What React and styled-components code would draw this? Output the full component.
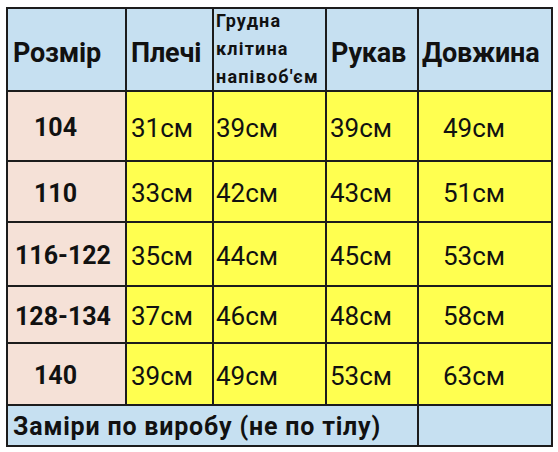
import React from "react";
import styled, { createGlobalStyle } from "styled-components";

const Global = createGlobalStyle`
  html, body { margin: 0; padding: 0; background: #ffffff; }
  body { font-family: Roboto, "Noto Sans", Arial, sans-serif; color: #111; }
`;

const Page = styled.div`
  width: 558px;
  height: 452px;
  padding: 7px 0 0 6px;
  box-sizing: border-box;
`;

const Table = styled.div`
  display: grid;
  grid-template-columns: 117px 85px 111px 90px 132px;
  grid-template-rows: 81px 68px 59px 62px 55px 60px 39px;
  gap: 2px;
  padding: 2px;
  background: #1c1c1c;
  width: max-content;
`;

const colors = {
  head: "#c6e0f1",
  size: "#f5e1d7",
  data: "#ffff50",
};

const Cell = styled.div`
  background: ${(p) => colors[p.$kind]};
  display: flex;
  align-items: center;
  padding-left: ${(p) => p.$indent ?? 4}px;
  box-sizing: border-box;
  overflow: hidden;
  white-space: nowrap;
  grid-column: ${(p) => p.$span || "auto"};
`;

const HeadText = styled.span`
  font-weight: 700;
  font-size: 27px;
  letter-spacing: -0.2px;
  padding-top: 6px;
`;

const SmallHead = styled.div`
  font-weight: 700;
  font-size: 18px;
  line-height: 28px;
  letter-spacing: 1.2px;
  margin-top: -2px;
`;

const SizeText = styled.span`
  font-weight: 700;
  font-size: 25px;
  padding-top: 3px;
`;

const DataText = styled.span`
  font-weight: 400;
  font-size: 26px;
  padding-top: 3px;
`;

const FootText = styled.span`
  font-weight: 700;
  font-size: 25px;
  letter-spacing: 0.8px;
  padding-top: 2px;
`;

const rows = [
  { size: "104", si: 26, v: ["31см", "39см", "39см", "49см"] },
  { size: "110", si: 26, v: ["33см", "42см", "43см", "51см"] },
  { size: "116-122", si: 7, v: ["35см", "44см", "45см", "53см"] },
  { size: "128-134", si: 7, v: ["37см", "46см", "48см", "58см"] },
  { size: "140", si: 26, v: ["39см", "49см", "53см", "63см"] },
];

const dataIndent = [4, 2, 3, 24];

export default function App() {
  return (
    <>
      <Global />
      <Page>
        <Table>
          <Cell $kind="head" $indent={5}><HeadText>Розмір</HeadText></Cell>
          <Cell $kind="head" $indent={4}><HeadText>Плечі</HeadText></Cell>
          <Cell $kind="head" $indent={2}>
            <SmallHead>Грудна<br />клітина<br />напівоб'єм</SmallHead>
          </Cell>
          <Cell $kind="head" $indent={4}><HeadText>Рукав</HeadText></Cell>
          <Cell $kind="head" $indent={3}><HeadText>Довжина</HeadText></Cell>
          {rows.map((r) => (
            <React.Fragment key={r.size}>
              <Cell $kind="size" $indent={r.si}><SizeText>{r.size}</SizeText></Cell>
              {r.v.map((v, i) => (
                <Cell key={i} $kind="data" $indent={dataIndent[i]}>
                  <DataText>{v}</DataText>
                </Cell>
              ))}
            </React.Fragment>
          ))}
          <Cell $kind="head" $span="1 / span 4" $indent={5}>
            <FootText>Заміри по виробу (не по тілу)</FootText>
          </Cell>
          <Cell $kind="head" />
        </Table>
      </Page>
    </>
  );
}
